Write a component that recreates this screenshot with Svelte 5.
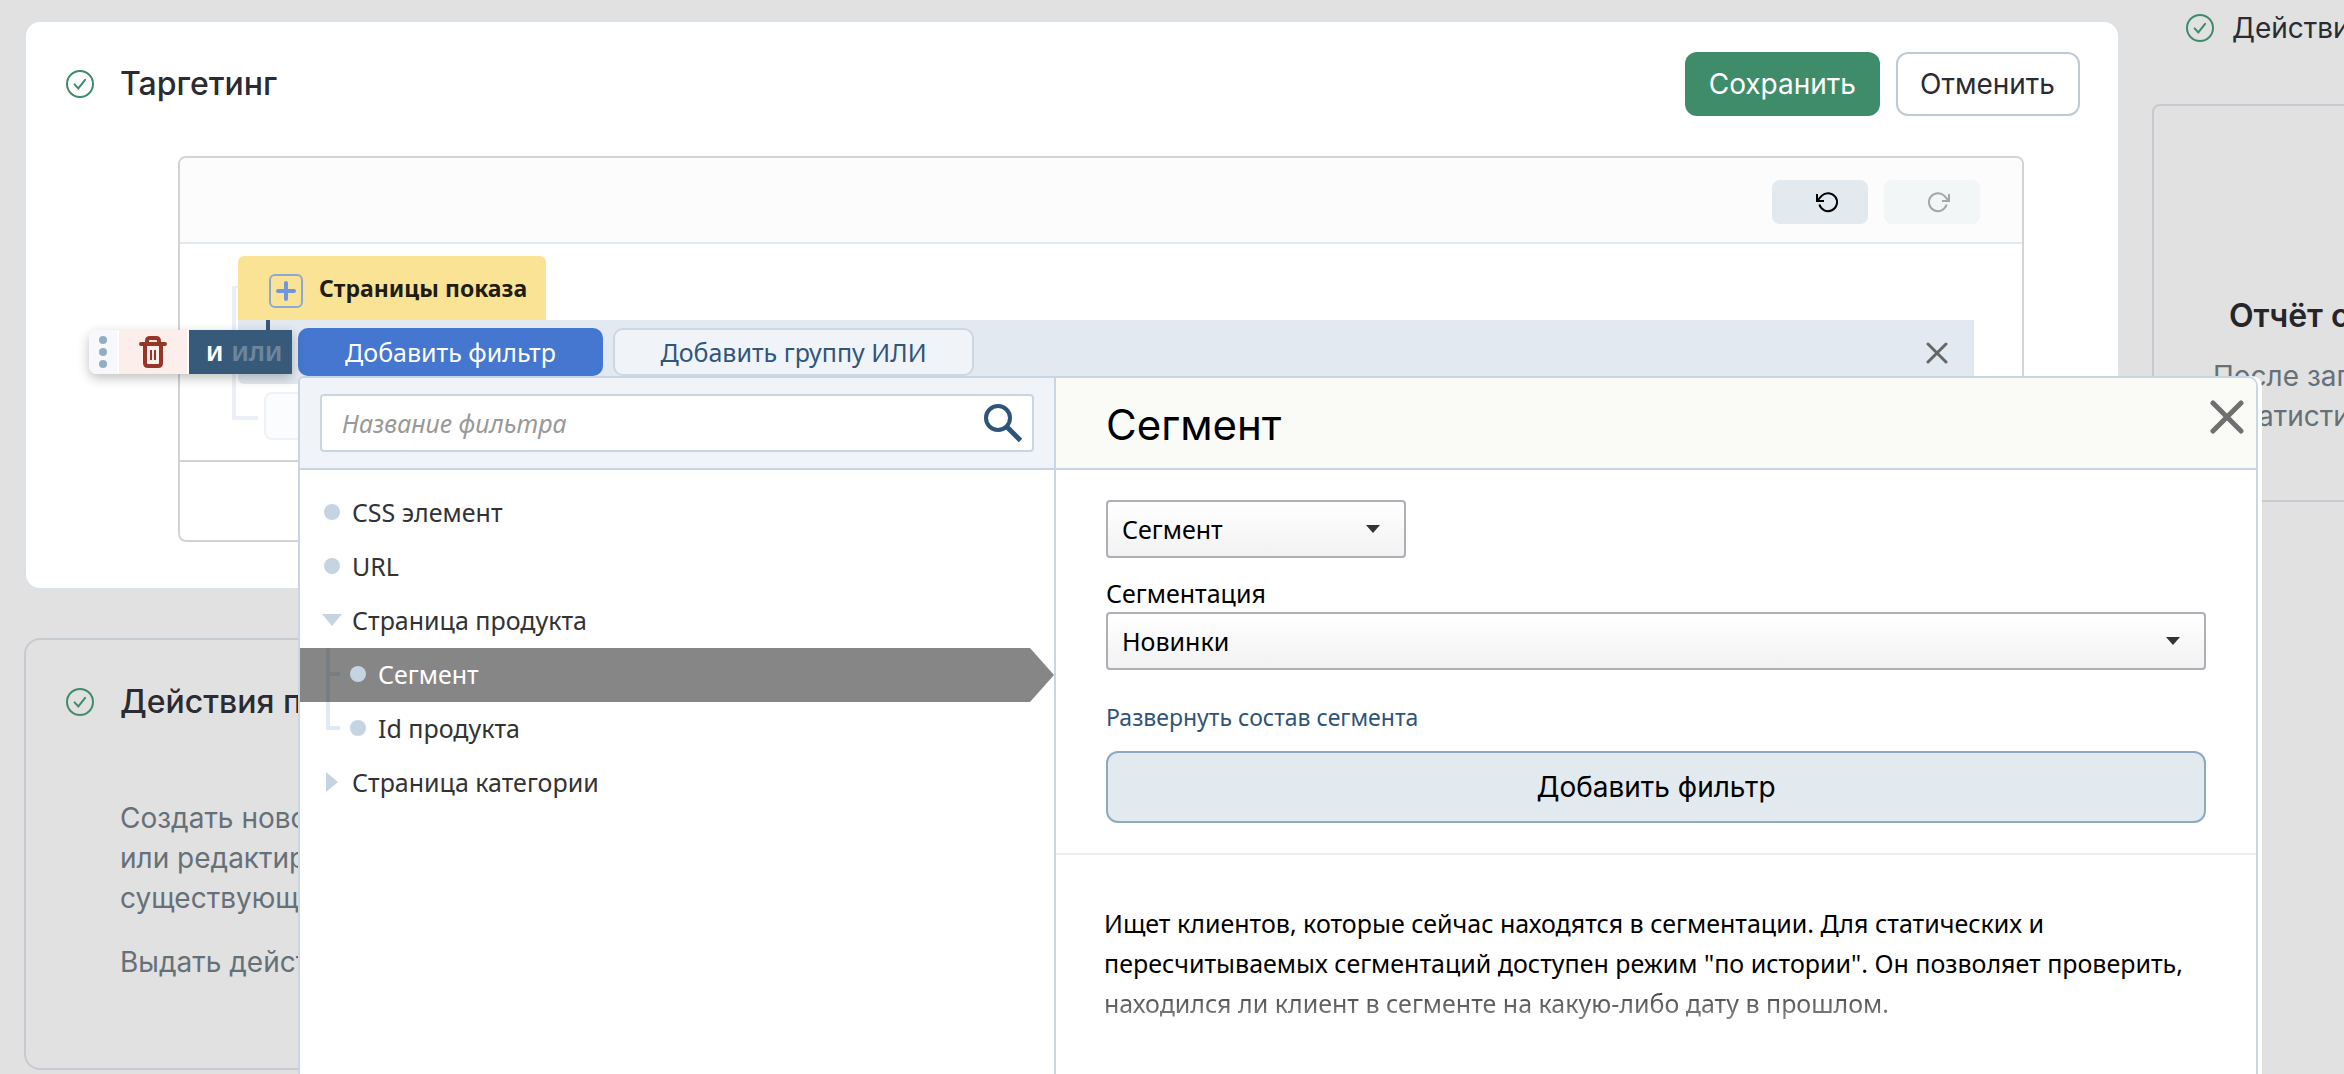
<script>
  let query = $state('');
  let operator = $state('И');
  let filterKind = $state('Сегмент');
  let segmentation = $state('Новинки');
  let selected = $state('Сегмент');

  const tree = [
    { label: 'CSS элемент', kind: 'leaf' },
    { label: 'URL', kind: 'leaf' },
    { label: 'Страница продукта', kind: 'open', children: ['Сегмент', 'Id продукта'] },
    { label: 'Страница категории', kind: 'closed' }
  ];
</script>

{#snippet check()}
  <svg class="check" viewBox="0 0 28 28" aria-hidden="true">
    <circle cx="14" cy="14" r="13" />
    <path d="M8.6 14.4l3.7 4 6.8-8.6" />
  </svg>
{/snippet}

{#snippet marker(kind)}
  <svg class="marker" viewBox="0 0 20 20" aria-hidden="true">
    {#if kind === 'leaf'}
      <circle cx="10" cy="10" r="8" />
    {:else if kind === 'open'}
      <path d="M0 4h20L10 16z" />
    {:else}
      <path d="M4 0v20l12-10z" />
    {/if}
  </svg>
{/snippet}

<div class="page">
  <main class="main">
    <section class="card active">
      <header class="card-head">
        {@render check()}
        <h2>Таргетинг</h2>
        <div class="actions">
          <button class="save" type="button">Сохранить</button>
          <button class="cancel" type="button">Отменить</button>
        </div>
      </header>

      <div class="editor">
        <div class="history">
          <button type="button" aria-label="Отменить действие">
            <svg viewBox="0 0 24 24"><path d="M2 4v7h7M2.5 10.5L6.6 5.9A9 9 0 1 1 4.4 14.5" /></svg>
          </button>
          <button type="button" aria-label="Повторить действие" disabled>
            <svg viewBox="0 0 24 24"><path d="M22 4v7h-7M21.5 10.5L17.4 5.9A9 9 0 1 0 19.6 14.5" /></svg>
          </button>
        </div>

        <div class="rules">
          <svg class="bracket" viewBox="0 0 26 134" aria-hidden="true">
            <path d="M0 1h6" stroke-width="2" />
            <path d="M2 0v132h24" stroke-width="4" />
          </svg>

          <div class="group">
            <div class="tab">
              <button class="plus" type="button" aria-label="Добавить условие">
                <svg viewBox="0 0 20 20"><path d="M10 2v16M2 10h16" /></svg>
              </button>
              <strong>Страницы показа</strong>
            </div>

            <div class="panel">
              <span class="stem"></span>
              <button class="add-filter" type="button">Добавить фильтр</button>
              <button class="add-group" type="button">Добавить группу ИЛИ</button>
              <button class="dismiss" type="button" aria-label="Убрать строку">
                <svg viewBox="0 0 22 22"><path d="M2 2l18 18M20 2L2 20" /></svg>
              </button>

              <div class="toolbar">
                <button class="drag" type="button" aria-label="Переместить">
                  <svg viewBox="0 0 8 32"><circle cx="4" cy="4" r="4" /><circle cx="4" cy="16" r="4" /><circle cx="4" cy="28" r="4" /></svg>
                </button>
                <button class="trash" type="button" aria-label="Удалить">
                  <svg viewBox="0 0 28 32">
                    <path d="M2 8h24M8 7V5q0-3 3-3h6q3 0 3 3v2" stroke-width="4" />
                    <path d="M6 9v18q0 3 3 3h10q3 0 3-3V9" stroke-width="4" stroke-linecap="butt" />
                    <path d="M12 14v10M16 14v10" stroke-width="2" stroke-linecap="butt" />
                  </svg>
                </button>
                <div class="operators">
                  {#each ['И', 'ИЛИ'] as op}
                    <button type="button" class:on={operator === op} onclick={() => (operator = op)}>{op}</button>
                  {/each}
                </div>
              </div>

              <div class="popup">
                <div class="catalog">
                  <div class="search-head">
                    <div class="search">
                      <input type="text" placeholder="Название фильтра" aria-label="Название фильтра" bind:value={query} />
                      <button type="button" aria-label="Найти">
                        <svg viewBox="0 0 38 38"><circle cx="14" cy="14" r="12" /><path d="M23 23L36.500 36.500" stroke-width="5" /></svg>
                      </button>
                    </div>
                  </div>
                  <ul class="tree">
                    {#each tree as node}
                      <li>
                        <button class="node" type="button">{@render marker(node.kind)}<span>{node.label}</span></button>
                        {#if node.children}
                          <ul>
                            {#each node.children as child, i}
                              <li>
                                <button class="node child" class:selected={selected === child} type="button" onclick={() => (selected = child)}>
                                  <svg class="branch" viewBox="0 0 14 54" aria-hidden="true">
                                    <path d={i === node.children.length - 1 ? 'M2 0v26h12' : 'M2 0v54M2 26h12'} />
                                  </svg>
                                  {@render marker('leaf')}<span>{child}</span>
                                </button>
                              </li>
                            {/each}
                          </ul>
                        {/if}
                      </li>
                    {/each}
                  </ul>
                </div>

                <div class="details">
                  <header class="details-head">
                    <h3>Сегмент</h3>
                    <button type="button" aria-label="Закрыть">
                      <svg viewBox="0 0 34 34"><path d="M3 3l28 28M31 3L3 31" /></svg>
                    </button>
                  </header>
                  <form class="form">
                    <div class="select short">
                      <select aria-label="Тип фильтра" bind:value={filterKind}><option>Сегмент</option></select>
                      <svg viewBox="0 0 14 8" aria-hidden="true"><path d="M0 0h14L7 8z" /></svg>
                    </div>
                    <label for="segmentation">Сегментация</label>
                    <div class="select">
                      <select id="segmentation" bind:value={segmentation}><option>Новинки</option></select>
                      <svg viewBox="0 0 14 8" aria-hidden="true"><path d="M0 0h14L7 8z" /></svg>
                    </div>
                    <a href="#segment">Развернуть состав сегмента</a>
                    <button class="submit" type="button">Добавить фильтр</button>
                  </form>
                  <p class="hint">
                    Ищет клиентов, которые сейчас находятся в сегментации. Для статических и<br />
                    пересчитываемых сегментаций доступен режим "по истории". Он позволяет проверить,<br />
                    <span>находился ли клиент в сегменте на какую-либо дату в прошлом.</span>
                  </p>
                </div>
              </div>
            </div>

            <div class="slot"></div>
          </div>
        </div>
        <div class="editor-foot"></div>
      </div>
    </section>

    <section class="card next">
      <header class="card-head">
        {@render check()}
        <h2>Действия п</h2>
      </header>
      <div class="notes">
        <p>Создать новое<br />или редактировать<br />существующее</p>
        <p>Выдать действие</p>
      </div>
    </section>
  </main>

  <aside class="side">
    <div class="side-head">{@render check()}<span>Действия</span></div>
    <div class="report">
      <h2>Отчёт о</h2>
      <p>После запуска<br /><span>статистика</span></p>
    </div>
  </aside>
</div>

<style>
  :global(body) { margin: 0; background: #e1e1e1; }
  .page, .page * { box-sizing: border-box; }
  .page {
    display: grid;
    grid-template-columns: minmax(0, 1fr) 196px;
    gap: 28px;
    height: 100vh;
    min-height: 1074px;
    padding-left: 24px;
    overflow: hidden;
    font-family: Inter, 'Liberation Sans', sans-serif;
    font-size: 28px;
    line-height: 40px;
    color: #2b2b33;
  }
  h2, h3, p, ul { margin: 0; padding: 0; }
  ul { list-style: none; }
  button { font: inherit; color: inherit; margin: 0; padding: 0; border: 0; background: none; cursor: pointer; }
  svg { display: block; flex: none; fill: none; stroke-linecap: round; }
  h2 { font-size: 32px; line-height: 40px; font-weight: 500; white-space: nowrap; }

  .main { padding-top: 20px; min-width: 0; }
  .card { border: 2px solid #dbe2e8; border-radius: 16px; }
  .card.active { background: #fff; padding: 30px 38px 46px 40px; }
  .card-head { display: flex; align-items: center; gap: 26px; height: 64px; }
  .check { width: 28px; height: 28px; stroke: #3f8c6b; stroke-width: 2; }
  .actions { display: flex; gap: 16px; margin-left: auto; }
  .actions button { height: 64px; padding: 0 24px; border-radius: 12px; }
  .save { background: #3f8c6b; color: #fff; }
  .actions .cancel { border: 2px solid #bfcad5; background: #fff; padding: 0 23px 0 22px; }

  .editor { margin: 40px 56px 0 112px; border: 2px solid #d3d3d3; border-radius: 8px; }
  .history {
    display: flex; justify-content: flex-end; gap: 16px; padding: 22px 42px 18px 0;
    background: #fcfcfc; border-bottom: 2px solid #e1e8ee; border-radius: 6px 6px 0 0;
  }
  .history button {
    display: flex; align-items: center; justify-content: flex-end; padding-right: 29px;
    width: 96px; height: 44px; border-radius: 8px; background: #e2e9ef; color: #000;
  }
  .history button:disabled { background: #f2f6f7; color: #a6a6a6; }
  .history svg { width: 24px; height: 24px; stroke: currentColor; stroke-width: 2; stroke-linecap: butt; }

  .rules { display: flex; padding: 12px 48px 20px 52px; font-family: 'Noto Sans', sans-serif; font-size: 25px; }
  .bracket { width: 26px; height: 134px; margin: 30px -20px 0 0; stroke: #eceff5; stroke-linecap: butt; }
  .group { flex: 1; min-width: 0; }
  .tab {
    display: inline-flex; align-items: center; gap: 16px; height: 64px; padding: 0 19px 0 31px;
    background: #fbe396; border-radius: 6px 6px 0 0; color: #1e1d12; font-size: 23px; vertical-align: top; position: relative;
  }
  .plus { display: flex; align-items: center; justify-content: center; width: 34px; height: 34px; margin-top: 6px; border: 2px solid #8aa9d6; border-radius: 6px; }
  .plus svg { width: 20px; height: 20px; stroke: #7096df; stroke-width: 4; }

  .panel { position: relative; display: flex; align-items: flex-start; gap: 10px; height: 64px; padding: 8px 26px 0 60px; background: #e2e9f0; border-radius: 0 0 6px 6px; }
  .add-filter, .add-group { height: 48px; border-radius: 10px; line-height: 44px; white-space: nowrap; }
  .add-filter { width: 305px; background: #4576d0; color: #fff; }
  .add-group { width: 361px; background: #f0f4f8; border: 2px solid #cbd8e3; color: #32557d; }
  .dismiss { margin: 14px 0 0 auto; }
  .dismiss svg { width: 22px; height: 22px; stroke: #666; stroke-width: 3; }
  .stem { position: absolute; left: 28px; top: 0; width: 4px; height: 10px; background: #385a7a; }

  .toolbar {
    position: absolute; left: -149px; top: 10px; display: flex; gap: 2px; width: 203px; height: 44px;
    background: #fff; border-radius: 8px 0 0 8px; box-shadow: 0 4px 12px rgba(0, 0, 0, 0.25);
  }
  .toolbar button { display: flex; align-items: center; justify-content: center; }
  .drag { width: 28px; background: #f6f8fb; border-radius: 8px 0 0 8px; }
  .drag svg { width: 8px; height: 32px; fill: #93adc2; }
  .trash { width: 68px; background: #fceeeb; }
  .trash svg { width: 28px; height: 32px; stroke: #983527; }
  .operators { flex: 1; display: flex; align-items: center; gap: 8px; padding-left: 17px; background: #385a7a; font-size: 22px; font-weight: 700; }
  .operators button { color: #6d869e; }
  .operators .on { color: #fff; }

  .slot { width: 900px; height: 48px; margin: 8px 0 0 26px; border: 2px solid #eef1f6; border-radius: 8px; background: #fafcfe; }
  .editor-foot { height: 80px; border-top: 2px solid #d3d3d3; }

  .popup {
    position: absolute; z-index: 2; left: 60px; right: -284px; top: 56px; min-height: 720px;
    display: grid; grid-template-columns: minmax(0, 756fr) minmax(0, 1200fr);
    background: #fff; border: 2px solid #c9d6e1; border-radius: 6px 10px 0 0; box-shadow: 4px 0 0 #fff; color: #333;
  }
  .catalog { border-right: 2px solid #c9d6e1; }
  .search-head { height: 92px; padding: 16px 20px; background: #f0f4f8; border-bottom: 2px solid #c9d6e1; border-radius: 4px 0 0 0; }
  .search { display: flex; align-items: center; height: 58px; padding: 0 10px 0 20px; background: #fff; border: 2px solid #c9d6e1; border-radius: 4px; }
  .search input { flex: 1; min-width: 0; height: 54px; padding: 0; border: 0; outline: 0; background: none; font: inherit; font-style: italic; color: #333; }
  .search input::placeholder { color: #999; opacity: 1; }
  .search svg { width: 38px; height: 38px; stroke: #2f547a; stroke-width: 4; stroke-linecap: butt; }
  .tree { padding-top: 16px; }
  .node { display: flex; align-items: center; gap: 10px; width: 100%; height: 54px; padding: 0 0 2px 22px; text-align: left; }
  .marker { width: 20px; height: 20px; fill: #c6d3e0; }
  .node.child { padding-left: 26px; }
  .branch { align-self: flex-start; width: 14px; height: 54px; margin-right: -2px; stroke: #e1e9f1; stroke-width: 4; stroke-linecap: butt; }
  .node.selected {
    background: #868686; color: #fff;
    clip-path: polygon(0 0, calc(100% - 24px) 0, 100% 50%, calc(100% - 24px) 100%, 0 100%);
  }
  .selected .branch { stroke: #787d82; }

  .details { color: #000; }
  .details-head { display: flex; align-items: flex-start; justify-content: space-between; height: 92px; padding: 22px 12px 0 50px; background: #fafbf7; border-bottom: 2px solid #c9d6e1; border-radius: 0 8px 0 0; }
  .details-head h3 { font-family: Inter, sans-serif; font-size: 42px; line-height: 50px; font-weight: 400; }
  .details-head svg { width: 34px; height: 34px; stroke: #707070; stroke-width: 5; }
  .form { display: flex; flex-direction: column; padding: 30px 50px; border-bottom: 2px solid #eee; }
  .select { display: grid; align-items: center; }
  .select.short { width: 300px; }
  .select select, .select svg { grid-area: 1 / 1; }
  .select select {
    appearance: none; width: 100%; height: 58px; margin: 0; padding: 0 14px; border: 2px solid #afafb5; border-radius: 4px;
    background: linear-gradient(#fff, #f2f2f2); font: inherit; color: #000;
  }
  .select svg { justify-self: end; width: 14px; height: 8px; margin-right: 26px; fill: #333; pointer-events: none; }
  .form label { margin-top: 16px; line-height: 38px; }
  .form a { align-self: flex-start; margin-top: 27px; font-size: 23px; line-height: 40px; color: #305479; text-decoration: none; }
  .submit { height: 72px; margin-top: 14px; border: 2px solid #8fa9c0; border-radius: 12px; background: #e2e9ef; font-family: Inter, sans-serif; font-size: 28px; }
  .hint { padding: 48px 0 40px 48px; font-size: 25px; line-height: 40px; white-space: nowrap; }
  .hint span { color: transparent; background: linear-gradient(#333, #888); background-clip: text; }

  .card.next { margin-top: 48px; padding: 30px 40px 0; height: 432px; border-color: #c5cbd0; }
  .notes { margin: 64px 0 0 54px; color: #667078; }
  .notes p + p { margin-top: 24px; }

  .side { padding-top: 8px; overflow: hidden; white-space: nowrap; }
  .side-head { display: flex; align-items: center; gap: 18px; padding-left: 38px; height: 40px; }
  .report { width: 640px; height: 398px; margin: 56px 0 0 4px; padding-top: 190px; border: 2px solid #c5cad0; border-radius: 8px; color: #667078; }
  .report h2 { padding-left: 75px; font-weight: 600; color: #26262a; }
  .report p { margin-top: 20px; padding-left: 59px; }
  .report span { padding-left: 16px; }
</style>
